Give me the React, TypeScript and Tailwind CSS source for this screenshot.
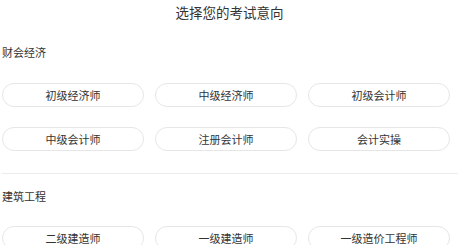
const sections = [
  {
    title: '财会经济',
    items: ['初级经济师', '中级经济师', '初级会计师', '中级会计师', '注册会计师', '会计实操'],
  },
  {
    title: '建筑工程',
    items: ['二级建造师', '一级建造师', '一级造价工程师'],
  },
];

function Pill({ label }: { label: string }) {
  return (
    <button className="h-[24px] rounded-full border border-[#e6e6e6] bg-white text-[11px] leading-none text-[#333]">
      {label}
    </button>
  );
}

export default function App() {
  return (
    <div
      className="w-[459px] h-[245px] overflow-hidden bg-white"
      style={{ fontFamily: '"Noto Sans CJK SC", "Noto Sans", sans-serif' }}
    >
      <div className="h-[24px] flex items-center justify-center text-[13.5px] text-[#333]">
        选择您的考试意向
      </div>

      {/* 财会经济 */}
      <div className="mt-[16px] h-[24px] pl-[2px] flex items-center text-[11px] text-[#333]">
        {sections[0].title}
      </div>
      <div className="mt-[19px] pl-[2px] pr-[9px] grid grid-cols-3 gap-x-[11px] gap-y-[20px]">
        {sections[0].items.map((item) => (
          <Pill key={item} label={item} />
        ))}
      </div>

      <div className="mt-[22px] ml-[2px] mr-[1px] h-px bg-[#ececec]" />

      {/* 建筑工程 */}
      <div className="mt-[10px] h-[24px] pl-[2px] flex items-center text-[11px] text-[#333]">
        {sections[1].title}
      </div>
      <div className="mt-[18px] pl-[2px] pr-[9px] grid grid-cols-3 gap-x-[11px] gap-y-[20px]">
        {sections[1].items.map((item) => (
          <Pill key={item} label={item} />
        ))}
      </div>
    </div>
  );
}
